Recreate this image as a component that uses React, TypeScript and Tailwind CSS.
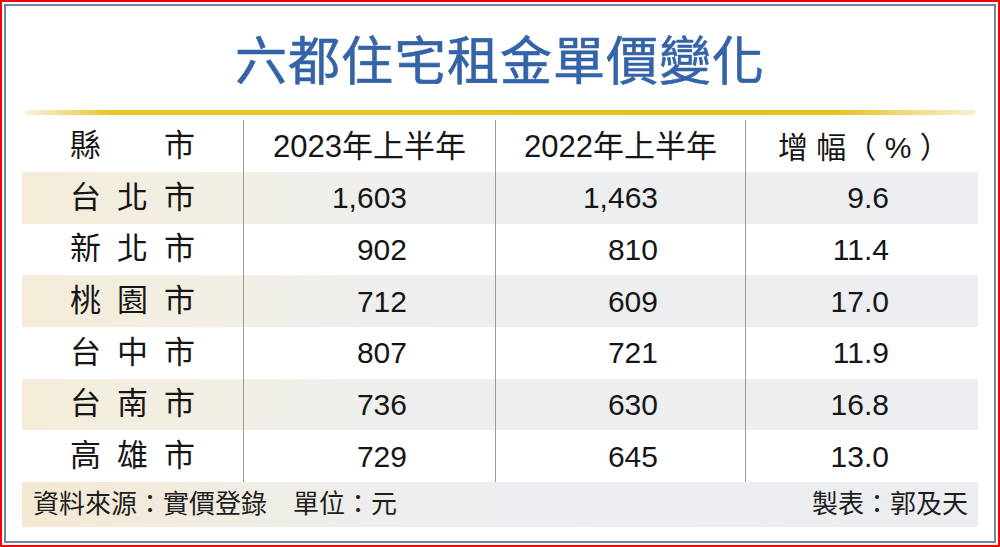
import React from "react";

const rows = [
  ["台", "北", "市", "1,603", "1,463", "9.6"],
  ["新", "北", "市", "902", "810", "11.4"],
  ["桃", "園", "市", "712", "609", "17.0"],
  ["台", "中", "市", "807", "721", "11.9"],
  ["台", "南", "市", "736", "630", "16.8"],
  ["高", "雄", "市", "729", "645", "13.0"],
];

const font = { fontFamily: '"Liberation Sans", "Noto Sans CJK TC", sans-serif' };

export default function App() {
  return (
    <div
      className="w-[1000px] h-[547px] border-2 border-[#ff0000] bg-white p-[2px] box-border"
      style={font}
    >
      <div className="h-full border-2 border-[#6f86ab] box-border px-[16px] flex flex-col text-[#161616]">
        <div className="pt-[30px] h-[104px] text-center text-[52px] leading-[52px] font-normal text-[#3563a8] tracking-[1px] [-webkit-text-stroke:0.6px_#3563a8]">
          六都住宅租金單價變化
        </div>
        <div className="mx-[3px] h-[5px] bg-[linear-gradient(to_right,#f8f2dc_0%,#e8c62a_9%,#e5c21c_85%,#f7efd2_100%)]" />
        <div className="mt-[5px] flex flex-col">
          <div className="flex h-[52px] text-[30px] items-center">
            <div className="w-[221px] h-full flex items-center justify-center text-[31px]">
              <div className="w-[125px] flex justify-between">
                <span>縣</span>
                <span>市</span>
              </div>
            </div>
            <div className="w-[252px] h-full border-l border-[#9a9a9a] flex items-center justify-center pt-[2px] text-[31px]">
              2023年上半年
            </div>
            <div className="w-[250px] h-full border-l border-[#9a9a9a] flex items-center justify-center pt-[2px] text-[31px]">
              2022年上半年
            </div>
            <div className="w-[232px] h-full border-l border-[#9a9a9a] flex items-center pl-[32px] pt-[2px] text-[30px]">
              增&nbsp;幅（&nbsp;%&nbsp;）
            </div>
          </div>
          {rows.map((r, i) => (
            <div
              key={i}
              className={
                "flex h-[51.67px] text-[30px] items-center " +
                (i % 2 === 0
                  ? "bg-[linear-gradient(to_right,#f4ecd8_0%,#f2efe6_22%,#edeef0_45%,#eceef1_100%)]"
                  : "bg-white")
              }
            >
              <div className="w-[221px] h-full flex items-center justify-center text-[31px]">
                <div className="w-[125px] flex justify-between">
                  <span>{r[0]}</span>
                  <span>{r[1]}</span>
                  <span>{r[2]}</span>
                </div>
              </div>
              <div className="w-[252px] h-full border-l border-[#9a9a9a] flex items-center justify-end pr-[88px]">
                {r[3]}
              </div>
              <div className="w-[250px] h-full border-l border-[#9a9a9a] flex items-center justify-end pr-[87px]">
                {r[4]}
              </div>
              <div className="w-[232px] h-full border-l border-[#9a9a9a] flex items-center justify-end pr-[88px]">
                {r[5]}
              </div>
            </div>
          ))}
          <div className="h-[45px] flex items-center justify-between pl-[11px] pr-[10px] text-[26px] text-[#1e1e1e] bg-[linear-gradient(to_right,#f4e9d2_0%,#f0ede6_25%,#eceef1_50%,#ebedf0_100%)]">
            <span>資料來源：實價登錄　單位：元</span>
            <span>製表：郭及天</span>
          </div>
        </div>
      </div>
    </div>
  );
}
